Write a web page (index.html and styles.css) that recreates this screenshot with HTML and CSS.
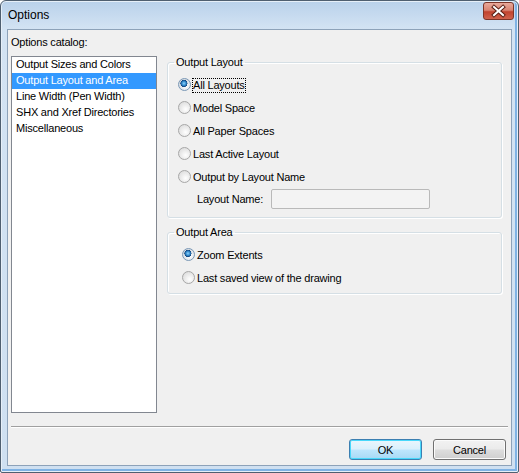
FILE: index.html
```html
<!DOCTYPE html>
<html>
<head>
<meta charset="utf-8">
<link rel="stylesheet" href="styles.css">
</head>
<body>
<div class="window">
  <div class="titlebar">
    <span class="title">Options</span>
    <span class="close">
      <svg width="31" height="18" viewBox="0 0 31 18">
        <path d="M11 5 L20 13 M20 5 L11 13" stroke="#5a1f14" stroke-width="4" stroke-linecap="square"/>
        <path d="M11 5 L20 13 M20 5 L11 13" stroke="#ffffff" stroke-width="2" stroke-linecap="square"/>
      </svg>
    </span>
  </div>
  <div class="client">
    <div class="main">
      <div class="left">
        <div class="cat-label">Options catalog:</div>
        <ul class="listbox">
          <li>Output Sizes and Colors</li>
          <li class="selected">Output Layout and Area</li>
          <li>Line Width (Pen Width)</li>
          <li>SHX and Xref Directories</li>
          <li>Miscellaneous</li>
        </ul>
      </div>
      <div class="right">
        <fieldset class="group g1">
          <legend>Output Layout</legend>
          <div class="radio"><span class="dot checked"></span><span class="txt focus">All Layouts</span></div>
          <div class="radio"><span class="dot"></span><span class="txt">Model Space</span></div>
          <div class="radio"><span class="dot"></span><span class="txt">All Paper Spaces</span></div>
          <div class="radio"><span class="dot"></span><span class="txt">Last Active Layout</span></div>
          <div class="radio"><span class="dot"></span><span class="txt">Output by Layout Name</span></div>
          <div class="namerow"><span class="namelabel">Layout Name:</span><span class="textbox"></span></div>
        </fieldset>
        <fieldset class="group g2">
          <legend>Output Area</legend>
          <div class="radio"><span class="dot checked"></span><span class="txt">Zoom Extents</span></div>
          <div class="radio"><span class="dot"></span><span class="txt">Last saved view of the drawing</span></div>
        </fieldset>
      </div>
    </div>
    <div class="sep"></div>
    <div class="buttons">
      <span class="btn default">OK</span>
      <span class="btn">Cancel</span>
    </div>
  </div>
</div>
</body>
</html>
```
FILE: styles.css
```css
html, body {
  margin: 0;
  padding: 0;
  background: #ffffff;
}
body {
  font-family: "Liberation Sans", Arial, sans-serif;
  font-size: 11px;
  letter-spacing: -0.2px;
  color: #000;
}
.window {
  width: 519px;
  height: 473px;
  box-sizing: border-box;
  border: 1px solid #4f5f70;
  border-radius: 6px 6px 2px 2px;
  padding: 0 6px 6px 6px;
  display: flex;
  flex-direction: column;
  background: linear-gradient(to bottom, #b9d1ea 0px, #c6daef 14px, #d3e3f3 28px, #cfe0f1 100%);
  box-shadow: inset 0 0 0 1px #e6eff8, inset -2px -2px 0 1px #7fb2e4;
}
.titlebar {
  height: 28px;
  display: flex;
  justify-content: space-between;
  align-items: flex-start;
  flex: none;
}
.title {
  font-size: 12px;
  letter-spacing: 0;
  padding-left: 1px;
  line-height: 28px;
  color: #000;
}
.close {
  width: 31px;
  height: 18px;
  margin-right: -2px;
  margin-top: 1px;
  box-sizing: border-box;
  border: 1px solid #7d3528;
  border-radius: 3px;
  background: linear-gradient(to bottom, #e9a99b 0%, #d98472 45%, #c1432e 55%, #d0624d 100%);
  position: relative;
  overflow: hidden;
}
.close svg {
  display: block;
  margin: -1px 0 0 -1px;
}
.client {
  flex: 1;
  background: #f0f0f0;
  border: 1px solid #8da2b9;
  padding: 5px 3px 0 3px;
  display: flex;
  flex-direction: column;
}
.main {
  display: flex;
  gap: 10px;
}
.left {
  width: 146px;
  display: flex;
  flex-direction: column;
}
.cat-label {
  height: 21px;
  line-height: 14px;
}
.listbox {
  margin: 0;
  padding: 0;
  list-style: none;
  width: 146px;
  height: 357px;
  box-sizing: border-box;
  border: 1px solid #828790;
  background: #fff;
}
.listbox li {
  height: 16px;
  line-height: 15px;
  padding-left: 4px;
  white-space: nowrap;
}
.listbox li.selected {
  background: #3399ff;
  color: #fff;
}
.right {
  width: 335px;
  margin-top: 21px;
  display: flex;
  flex-direction: column;
}
.group {
  margin: 0;
  min-width: 0;
  border: 1px solid #d5dfe5;
  border-radius: 3px;
  box-shadow: 1px 1px 0 #fff, inset 1px 1px 0 #fff;
}
.group legend {
  padding: 0 2px;
  line-height: 13px;
  font-size: 11px;
}
.g1 {
  padding: 4px 0 8px 10px;
}
.g1 legend {
  margin-left: -4px;
}
.g2 {
  margin-top: 8px;
  padding: 4px 0 4px 14px;
}
.g2 legend {
  margin-left: -8px;
}
.radio {
  height: 23px;
  display: flex;
  align-items: center;
}
.radio .txt {
  margin-top: 1px;
}
.dot {
  width: 13px;
  height: 13px;
  box-sizing: border-box;
  border-radius: 50%;
  border: 1px solid #a7a7a7;
  background: radial-gradient(circle at 60% 65%, #ffffff 0%, #ececec 45%, #d6d6d6 100%);
  margin-right: 1px;
  flex: none;
  position: relative;
}
.dot.checked {
  border-color: #7b98b6;
  background:
    radial-gradient(circle at 45% 40%, #8fd3ff 0px, #2e86c8 2.2px, #10407a 3.4px, rgba(16,64,122,0) 3.7px),
    radial-gradient(circle at 60% 65%, #ffffff 0%, #e4e9ee 45%, #c5ccd3 100%);
}
.txt {
  border: 1px dotted transparent;
  line-height: 13px;
  white-space: nowrap;
}
.txt.focus {
  border-color: #000;
}
.namerow {
  display: flex;
  align-items: center;
  height: 20px;
  margin-top: 1px;
  padding-left: 19px;
}
.namelabel {
  width: 74px;
  white-space: nowrap;
}
.textbox {
  width: 159px;
  height: 20px;
  box-sizing: border-box;
  border: 1px solid #b9b9b9;
  border-radius: 2px;
  background: #f3f3f3;
}
.sep {
  margin-top: 13px;
  height: 1px;
  background: #a0a0a0;
  border-bottom: 1px solid #ffffff;
}
.buttons {
  margin-top: 11px;
  display: flex;
  justify-content: flex-end;
  gap: 11px;
  padding-right: 2px;
}
.btn {
  width: 73px;
  height: 21px;
  box-sizing: border-box;
  border: 1px solid #707070;
  border-radius: 3px;
  background: linear-gradient(to bottom, #f2f2f2 0%, #ebebeb 48%, #dddddd 52%, #cfcfcf 100%);
  display: flex;
  align-items: center;
  justify-content: center;
  box-shadow: inset 0 0 0 1px #fbfbfb;
}
.btn.default {
  border-color: #3c7fb1;
  background: linear-gradient(to bottom, #eaf6fd 0%, #d9f0fc 48%, #bee6fd 52%, #a7d9f5 100%);
  box-shadow: inset 0 0 0 1px #48d8fb;
}
```
